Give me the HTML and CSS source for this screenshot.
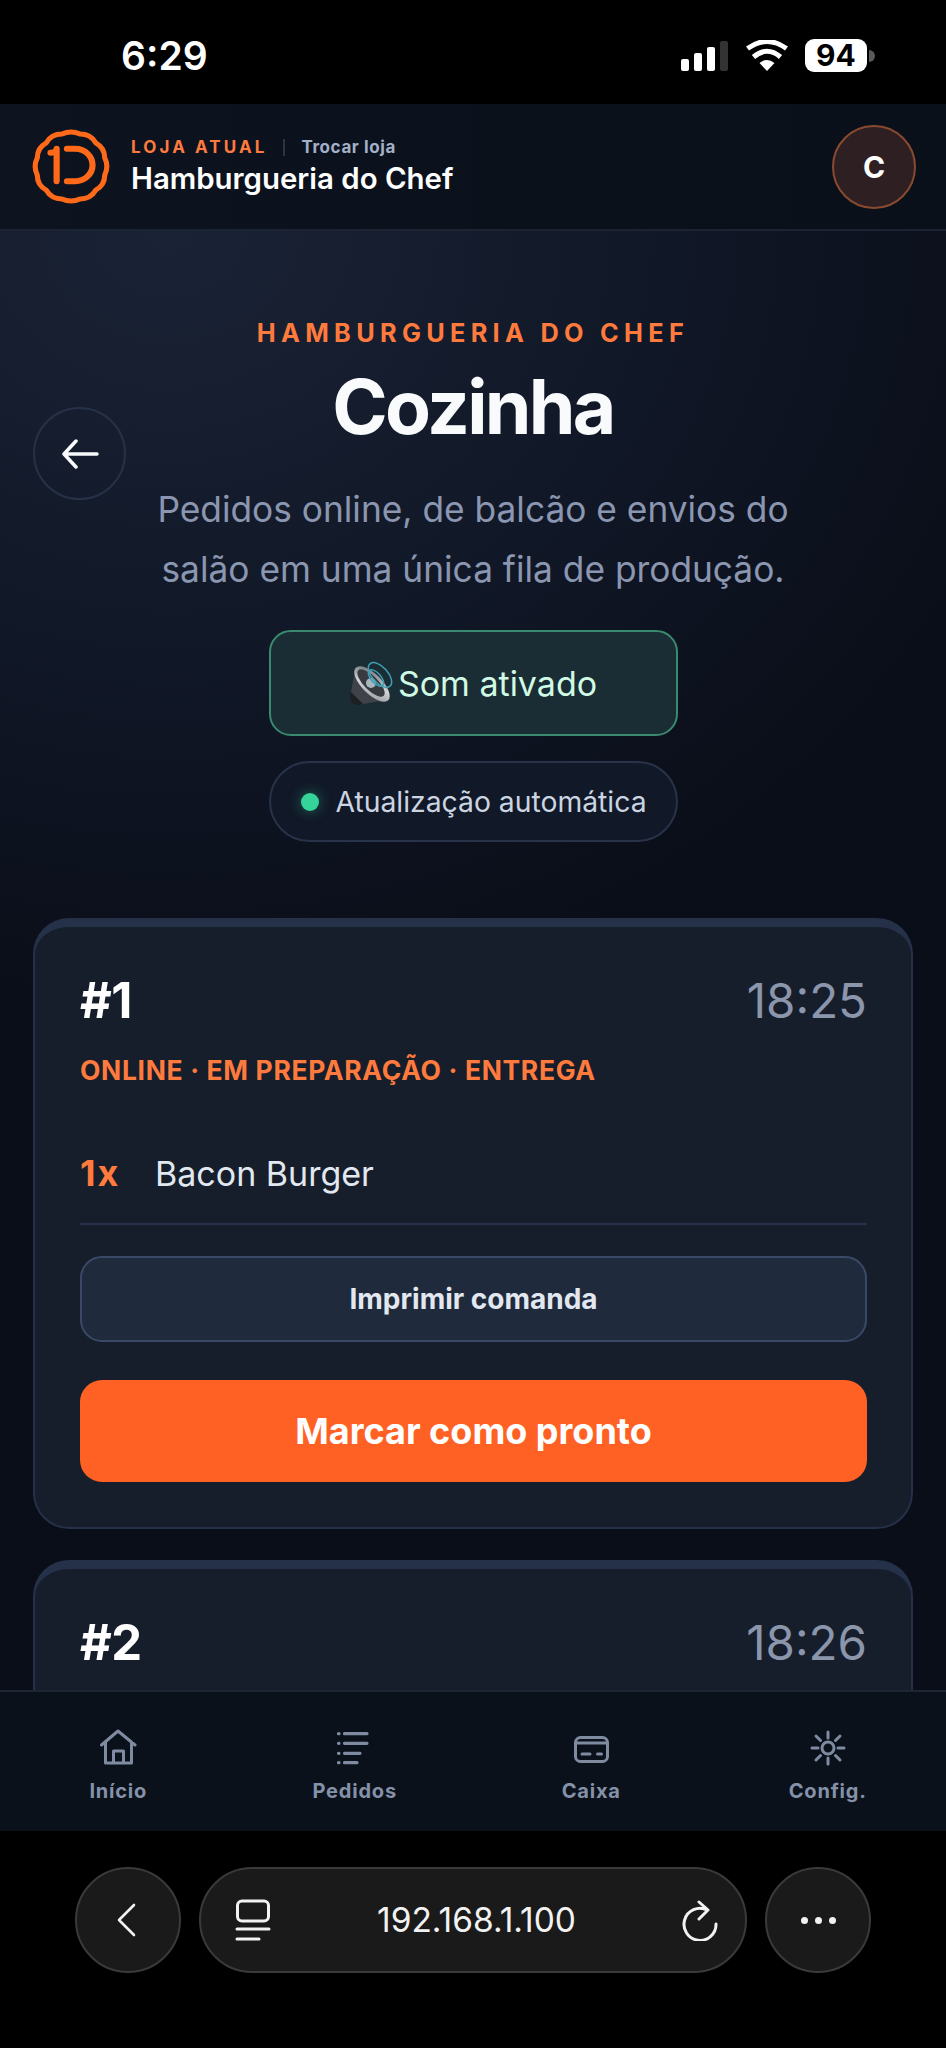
FILE: index.html
```html
<!DOCTYPE html>
<html lang="pt-BR">

<head>
    <meta charset="UTF-8">
    <meta name="viewport" content="width=device-width, initial-scale=1.0">
    <title>Cozinha | Hamburgueria do Chef</title>
    <link rel="stylesheet" href="styles.css">
</head>

<body>
    <div class="status-bar">
        <span class="status-time">6:29</span>
        <div class="status-icons">
            <svg class="status-signal" width="48" height="30" viewBox="0 0 48 30" fill="#fff">
                <rect x="0" y="18" width="8" height="12" rx="2" />
                <rect x="13" y="12" width="8" height="18" rx="2" />
                <rect x="26" y="6" width="8" height="24" rx="2" />
                <rect x="39" y="0" width="8" height="30" rx="2" fill="#333" />
            </svg>
            <svg class="status-wifi" width="42" height="31" viewBox="0 0 42 31">
                <path d="M21 31 L13.500 23 Q21 17 28.500 23 Z" fill="#fff" />
                <path d="M7.500 17 Q21 5.500 34.500 17" fill="none" stroke="#fff" stroke-width="5" />
                <path d="M1.500 8.500 Q21 -5.500 40.500 8.500" fill="none" stroke="#fff" stroke-width="5" />
            </svg>
            <div class="status-battery"><span>94</span></div>
            <i class="status-nub"></i>
        </div>
    </div>

    <header class="app-header">
        <svg class="logo" width="78" height="75" viewBox="-38 -38 76 76" preserveAspectRatio="none" fill="none" stroke="#ff6a1a" stroke-width="5" stroke-linecap="round" stroke-linejoin="round">
            <path d="M32.840 8.800 Q32.900 19 24.040 24.040 Q19 32.900 8.800 32.840 Q0 37 -8.800 32.840 Q-19 32.900 -24.040 24.040 Q-32.900 19 -32.840 8.800 Q-37 0 -32.840 -8.800 Q-32.900 -19 -24.040 -24.040 Q-19 -32.900 -8.800 -32.840 Q0 -37 8.800 -32.840 Q19 -32.900 24.040 -24.040 Q32.900 -19 32.840 -8.800 Q37 0 32.840 8.800 Z" />
            <path d="M-20 -14 Q-14 -14 -14 -18 V15" stroke-width="6" />
            <path d="M-4 -18 H4 C14 -18 21 -10 21 -1.500 C21 8 13 15 4 15 H-4" stroke-width="6" />
        </svg>
        <div class="store-info">
            <div class="store-top">
                <span class="store-label">LOJA ATUAL</span>
                <i class="store-sep"></i>
                <span class="store-switch">Trocar loja</span>
            </div>
            <div class="store-name">Hamburgueria do Chef</div>
        </div>
        <div class="avatar">C</div>
    </header>

    <main class="page">
        <section class="hero">
            <button class="back-btn">
                <svg width="38" height="30" viewBox="0 0 38 30" fill="none" stroke="#f8fafc" stroke-width="3.500" stroke-linecap="round" stroke-linejoin="round">
                    <path d="M36 15 H3 M15 2 L3 15 L15 28" />
                </svg>
            </button>
            <div class="hero-eyebrow">HAMBURGUERIA DO CHEF</div>
            <h1 class="hero-title">Cozinha</h1>
            <p class="hero-sub">Pedidos online, de balcão e envios do<br>salão em uma única fila de produção.</p>
            <div class="hero-actions">
                <button class="sound-btn">
                    <svg class="sound-icon" width="48" height="50" viewBox="0 0 48 50">
                        <defs>
                            <linearGradient id="rimShade" x1="0" y1="0" x2="1" y2="1">
                                <stop offset="0" stop-color="#5d6268" />
                                <stop offset="0.550" stop-color="#d2d6da" />
                                <stop offset="1" stop-color="#8b8f95" />
                            </linearGradient>
                        </defs>
                        <ellipse cx="9" cy="39" rx="8" ry="8" fill="#1d1f22" />
                        <path d="M6 12 L2 34 L14 46 L38 42 Z" fill="#3f4349" />
                        <ellipse cx="23" cy="26" rx="23" ry="10" transform="rotate(45 23 26)" fill="url(#rimShade)" />
                        <ellipse cx="22" cy="25" rx="18" ry="7" transform="rotate(45 22 25)" fill="#383b40" />
                        <circle cx="22" cy="25" r="5" fill="#a8b7be" />
                        <ellipse cx="31" cy="17" rx="8" ry="15" transform="rotate(-42 31 17)" fill="none" stroke="#3f9fb5" stroke-width="1.500" />
                        <ellipse cx="27" cy="20" rx="5" ry="10" transform="rotate(-42 27 20)" fill="none" stroke="#3f9fb5" stroke-width="1.500" />
                    </svg>
                    <span>Som ativado</span>
                </button>
                <div class="auto-pill">
                    <i class="auto-dot"></i>
                    <span>Atualização automática</span>
                </div>
            </div>
        </section>

        <section class="orders">
            <article class="order-card">
                <div class="order-head">
                    <span class="order-num">#1</span>
                    <span class="order-time">18:25</span>
                </div>
                <div class="order-meta">ONLINE · EM PREPARAÇÃO · ENTREGA</div>
                <div class="order-item">
                    <span class="item-qty">1x</span>
                    <span class="item-name">Bacon Burger</span>
                </div>
                <button class="print-btn">Imprimir comanda</button>
                <button class="ready-btn">Marcar como pronto</button>
            </article>

            <article class="order-card order-card-cut">
                <div class="order-head">
                    <span class="order-num">#2</span>
                    <span class="order-time">18:26</span>
                </div>
            </article>
        </section>
    </main>

    <nav class="bottom-nav">
        <a class="nav-item">
            <svg width="38" height="38" viewBox="0 0 38 38" fill="none" stroke="#7f8ba1" stroke-width="3" stroke-linejoin="round" stroke-linecap="round">
                <path d="M2.500 16 L19 2 L36 16 M6.500 13 V34 H32.500 V13 M14.500 34 V22 H24.500 V34" />
            </svg>
            <span>Início</span>
        </a>
        <a class="nav-item">
            <svg width="38" height="38" viewBox="0 0 38 38" fill="none" stroke="#7f8ba1" stroke-width="3.200" stroke-linecap="round">
                <path d="M2.500 4.700 H3 M8.500 4.700 H31 M2.500 14.300 H3 M8.500 14.300 H31 M2.500 24.300 H3 M8.500 24.300 H24 M2.500 33.700 H3 M8.500 33.700 H21" />
            </svg>
            <span>Pedidos</span>
        </a>
        <a class="nav-item">
            <svg width="38" height="38" viewBox="0 0 38 38" fill="none" stroke="#7f8ba1" stroke-width="3" stroke-linecap="round">
                <rect x="3.500" y="8.500" width="32" height="24" rx="5" />
                <path d="M3.500 14 H35.500 M10 25 H18 M25.500 25 H29.500" />
            </svg>
            <span>Caixa</span>
        </a>
        <a class="nav-item">
            <svg width="38" height="38" viewBox="0 0 38 38" fill="none" stroke="#7f8ba1" stroke-width="3" stroke-linecap="round">
                <circle cx="19" cy="19" r="6" />
                <path d="M19 3 V9 M19 29 V35 M3 19 H9 M29 19 H35 M7 7 L11.500 11.500 M26.500 26.500 L31 31 M31 7 L26.500 11.500 M11.500 26.500 L7 31" />
            </svg>
            <span>Config.</span>
        </a>
    </nav>

    <footer class="browser-bar">
        <button class="browser-round">
            <svg class="chevron" width="22" height="36" viewBox="0 0 22 36" fill="none" stroke="#f2f2f2" stroke-width="2.600" stroke-linecap="round" stroke-linejoin="round">
                <path d="M17 3 L2 18 L17 33" />
            </svg>
        </button>
        <div class="browser-url">
            <svg width="36" height="42" viewBox="0 0 36 42" fill="none" stroke="#f2f2f2" stroke-width="3" stroke-linecap="round">
                <rect x="2.500" y="2" width="31" height="20" rx="4.500" />
                <path d="M2 30 H34 M2 40 H24" />
            </svg>
            <span>192.168.1.100</span>
            <svg width="36" height="42" viewBox="0 0 36 42" fill="none" stroke="#f2f2f2" stroke-width="3" stroke-linecap="round" stroke-linejoin="round">
                <path d="M25 11 A16 16 0 1 0 34 25 M17 3 L26 11 L17 20" />
            </svg>
        </div>
        <button class="browser-round">
            <i class="dot"></i><i class="dot"></i><i class="dot"></i>
        </button>
    </footer>
</body>

</html>
```

FILE: styles.css
```css
* {
    box-sizing: border-box;
}

html,
body {
    margin: 0;
    padding: 0;
}

body {
    width: 946px;
    height: 2048px;
    overflow: hidden;
    display: flex;
    flex-direction: column;
    font-family: Inter, "Liberation Sans", sans-serif;
    background-color: #000000;
    color: #ffffff;
}

button {
    font-family: inherit;
    cursor: pointer;
}

/* phone status bar */
.status-bar {
    height: 104px;
    flex-shrink: 0;
    display: flex;
    justify-content: space-between;
    align-items: flex-start;
    padding: 0 71px 0 121px;
    background-color: #000000;
}

.status-time {
    margin-top: 33px;
    font-size: 39px;
    line-height: 46px;
    font-weight: 600;
}

.status-icons {
    display: flex;
    align-items: center;
    margin-top: 39px;
    height: 33px;
}

.status-signal {
    margin-right: 17px;
}

.status-wifi {
    margin-right: 17px;
}

.status-battery {
    width: 62px;
    height: 33px;
    border-radius: 9px;
    background-color: #ffffff;
    color: #000000;
    font-size: 30px;
    font-weight: 700;
    text-align: center;
    line-height: 33px;
}

.status-nub {
    width: 6px;
    height: 12px;
    margin-left: 2px;
    border-radius: 0 6px 6px 0;
    background-color: #5a5a5a;
}

/* app header */
.app-header {
    height: 127px;
    flex-shrink: 0;
    display: flex;
    align-items: center;
    padding: 0 30px 0 32px;
    background: linear-gradient(90deg, #0d131f, #0a1019);
    border-bottom: 2px solid #1c2432;
}

.store-info {
    flex: 1;
    margin-left: 21px;
}

.store-top {
    display: flex;
    align-items: center;
    height: 22px;
}

.store-label {
    color: #ff7a3d;
    font-size: 17px;
    font-weight: 700;
    letter-spacing: 3.100px;
}

.store-sep {
    width: 2px;
    height: 17px;
    margin: 0 17px 0 15px;
    background-color: #2b3344;
}

.store-switch {
    color: #a3b0c9;
    font-size: 17px;
    font-weight: 700;
    letter-spacing: 0.600px;
}

.store-name {
    margin-top: 3px;
    font-size: 29.400px;
    line-height: 36px;
    font-weight: 600;
}

.avatar {
    width: 84px;
    height: 84px;
    display: flex;
    align-items: center;
    justify-content: center;
    border-radius: 50%;
    border: 2px solid #8a4a30;
    background-color: #2d1f22;
    font-size: 30px;
    font-weight: 700;
}

.page {
    flex: 1;
    min-height: 0;
    overflow: hidden;
    padding: 0 33px;
    background: radial-gradient(900px 780px at 18% 0, #1a2336, #0e1422 70%, #0a0e18 100%);
}

.hero {
    position: relative;
    padding-top: 89px;
    text-align: center;
}

.back-btn {
    position: absolute;
    left: 0;
    top: 176px;
    width: 93px;
    height: 93px;
    display: flex;
    align-items: center;
    justify-content: center;
    border-radius: 50%;
    border: 2px solid #263147;
    background: transparent;
}

.hero-eyebrow {
    color: #ff7a3d;
    font-size: 25.300px;
    line-height: 26px;
    font-weight: 700;
    letter-spacing: 5.300px;
}

.hero-title {
    margin: 17px 0 0;
    color: #f8fafc;
    font-size: 75px;
    line-height: 88px;
    font-weight: 700;
    letter-spacing: -2.700px;
}

.hero-sub {
    margin: 29px 0 0;
    color: #8b96b0;
    font-size: 35.300px;
    line-height: 60px;
}

.hero-actions {
    margin-top: 30px;
    display: flex;
    flex-direction: column;
    align-items: center;
    gap: 25px;
}

.sound-btn {
    width: 409px;
    height: 106px;
    display: flex;
    align-items: center;
    justify-content: center;
    gap: 1px;
    border-radius: 22px;
    border: 2px solid #3a8a70;
    background-color: #1a2d34;
    color: #d1fae5;
    font-size: 34px;
}

.auto-pill {
    width: 409px;
    height: 81px;
    display: flex;
    align-items: center;
    gap: 17px;
    padding-left: 30px;
    border-radius: 41px;
    border: 2px solid #283349;
    background-color: #111827;
    color: #cbd5e1;
    font-size: 28.300px;
}

.auto-dot {
    width: 18px;
    height: 18px;
    border-radius: 50%;
    background-color: #34d399;
    box-shadow: 0 0 14px rgba(52, 211, 153, 0.45);
}

/* order cards */
.orders {
    margin-top: 76px;
    display: flex;
    flex-direction: column;
    gap: 31px;
}

.order-card {
    padding: 50px 44px 45px 45px;
    border-radius: 36px;
    border: 2px solid #253148;
    border-top-width: 9px;
    background-color: #161e2b;
}

/* second card runs on below the tab bar */
.order-card-cut {
    min-height: 400px;
}

.order-head {
    display: flex;
    justify-content: space-between;
    align-items: center;
    height: 46px;
}

.order-num {
    font-size: 49px;
    font-weight: 700;
    letter-spacing: -0.500px;
}

.order-time {
    color: #8b95ab;
    font-size: 47.500px;
}

.order-meta {
    margin-top: 32px;
    color: #ff7a3d;
    font-size: 26.500px;
    line-height: 30px;
    font-weight: 700;
    letter-spacing: 0.650px;
}

.order-item {
    display: flex;
    align-items: center;
    height: 134px;
    margin-top: 6px;
    padding-top: 32px;
    border-bottom: 2px solid #26324a;
}

.item-qty {
    width: 75px;
    color: #ff7a3d;
    font-size: 36px;
    font-weight: 700;
    letter-spacing: 2px;
}

.item-name {
    color: #e2e8f0;
    font-size: 34px;
}

.print-btn {
    display: block;
    width: 100%;
    height: 86px;
    margin-top: 31px;
    border-radius: 22px;
    border: 2px solid #3a4a66;
    background-color: #1f2a3d;
    color: #e2e8f0;
    font-size: 28px;
    font-weight: 700;
}

.ready-btn {
    display: block;
    width: 100%;
    height: 102px;
    margin-top: 38px;
    border: 0;
    border-radius: 22px;
    background-color: #ff6124;
    color: #ffffff;
    font-size: 36px;
    font-weight: 700;
}

/* bottom tabs */
.bottom-nav {
    height: 141px;
    flex-shrink: 0;
    display: grid;
    grid-template-columns: repeat(4, 1fr);
    padding-top: 37px;
    border-top: 2px solid #1f2633;
    background-color: #0a111b;
}

.nav-item {
    display: flex;
    flex-direction: column;
    align-items: center;
    color: #8591a8;
    font-size: 20px;
    font-weight: 700;
    letter-spacing: 0.800px;
}

.nav-item span {
    margin-top: 12px;
}

/* browser toolbar */
.browser-bar {
    height: 217px;
    flex-shrink: 0;
    display: flex;
    gap: 18px;
    padding: 36px 75px 0;
    background-color: #000000;
}

.browser-round {
    width: 106px;
    height: 106px;
    display: flex;
    align-items: center;
    justify-content: center;
    gap: 7px;
    flex-shrink: 0;
    border-radius: 50%;
    border: 2px solid #3a3a3a;
    background-color: #1a1a1a;
}

.browser-url {
    flex: 1;
    height: 106px;
    display: flex;
    align-items: center;
    justify-content: space-between;
    padding: 0 27px 0 34px;
    border-radius: 53px;
    border: 2px solid #3a3a3a;
    background-color: #1a1a1a;
    color: #f2f2f2;
    font-size: 33.500px;
}

.dot {
    width: 7px;
    height: 7px;
    border-radius: 50%;
    background-color: #f2f2f2;
}
```
